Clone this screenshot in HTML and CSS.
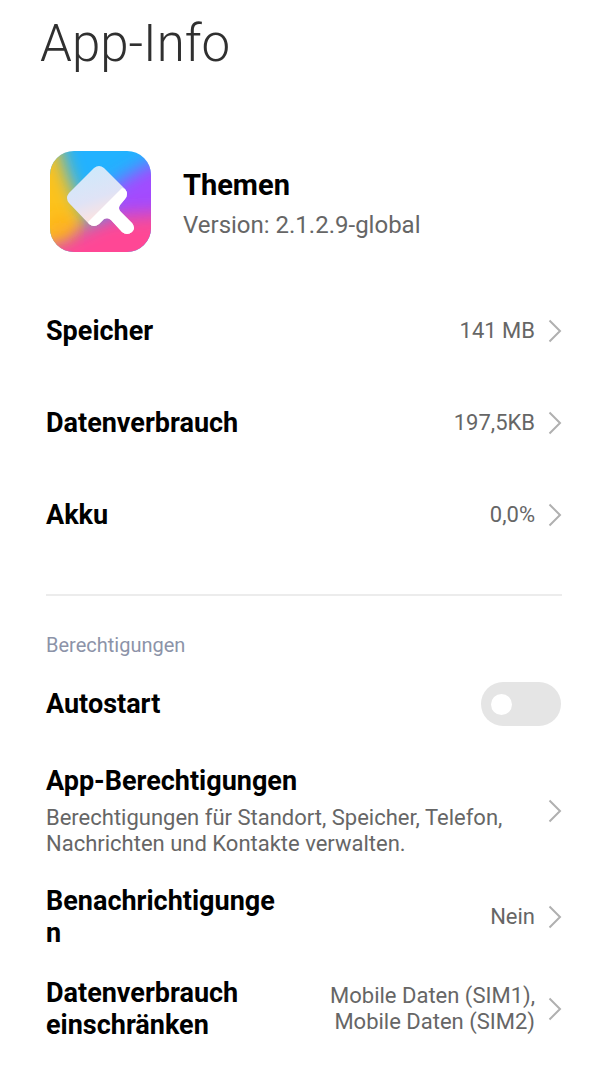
FILE: index.html
```
<!doctype html>
<html lang="de">
  <head>
    <meta charset="utf-8">
    <meta name="viewport" content="width=device-width, initial-scale=1">
    <title>App-Info</title>
    <link rel="stylesheet" href="styles.css">
  </head>
  <body>
    <svg width="0" height="0" class="defs" aria-hidden="true">
      <symbol id="chevron" viewBox="0 0 14 24">
        <path d="M1.5 1.5 L12 12 L1.5 22.5" fill="none" stroke="#b0b0b0" stroke-width="2"/>
      </symbol>
    </svg>

    <h1>App-Info</h1>

    <main>
      <header class="app">
        <svg class="app-icon" viewBox="0 0 101 101" aria-hidden="true">
          <defs>
            <clipPath id="tile"><rect width="101" height="101" rx="24"/></clipPath>
            <linearGradient id="glass" x1="40" y1="18" x2="56" y2="64" gradientUnits="userSpaceOnUse">
              <stop offset="0" stop-color="#cfe9fb"/>
              <stop offset="0.6" stop-color="#dfe3f6"/>
              <stop offset="1" stop-color="#fbe3e2"/>
            </linearGradient>
            <filter id="soft" x="-50%" y="-50%" width="200%" height="200%">
              <feGaussianBlur stdDeviation="9"/>
            </filter>
          </defs>
          <g clip-path="url(#tile)">
            <rect width="101" height="101" fill="#22b2ff"/>
            <path d="M140 4 L100 12 L60 36 V80 H140 Z" fill="#a24bff" filter="url(#soft)"/>
            <path d="M-30 -30 H2 L16 20 L40 80 L-30 120 Z" fill="#fcc21c" filter="url(#soft)"/>
            <path d="M-30 110 L22 82 L56 66 L76 64 L140 60 V130 H-30 Z" fill="#ff4795" filter="url(#soft)"/>
            <circle cx="10" cy="76" r="12" fill="#ffb01c" filter="url(#soft)"/>
          </g>
          <path d="M44 17 Q49 13 54 17 L75 38 Q79 43 75 48 L70 54 Q68 57 70 60 L82 72 Q86 77 82 81 Q77 85 72 81 L61 69 Q58 66 54 68 L49 73 Q44 77 39 73 L19 52 Q15 47 19 42 Z" fill="url(#glass)"/>
          <path d="M72 37 L75 38 Q79 43 75 48 L70 54 Q68 57 70 60 L82 72 Q86 77 82 81 Q77 85 72 81 L61 69 Q58 66 54 68 L49 73 Q44 77 39 73 L38 71 Z" fill="#fff"/>
        </svg>
        <div class="app-text">
          <h2>Themen</h2>
          <p class="version">Version: 2.1.2.9-global</p>
        </div>
      </header>

      <nav class="group">
        <a class="row" href="#speicher">
          <span class="name">Speicher</span>
          <span class="value">141 MB</span>
          <svg class="chevron"><use href="#chevron"/></svg>
        </a>
        <a class="row" href="#datenverbrauch">
          <span class="name">Datenverbrauch</span>
          <span class="value">197,5KB</span>
          <svg class="chevron"><use href="#chevron"/></svg>
        </a>
        <a class="row" href="#akku">
          <span class="name">Akku</span>
          <span class="value">0,0%</span>
          <svg class="chevron"><use href="#chevron"/></svg>
        </a>
      </nav>

      <section class="group permissions">
        <h3>Berechtigungen</h3>
        <div class="row">
          <label class="name" for="autostart">Autostart</label>
          <input class="switch" type="checkbox" role="switch" id="autostart">
        </div>
        <a class="row row-tall" href="#app-berechtigungen">
          <span class="name">App-Berechtigungen
            <small>Berechtigungen für Standort, Speicher, Telefon, Nachrichten und Kontakte verwalten.</small>
          </span>
          <svg class="chevron"><use href="#chevron"/></svg>
        </a>
        <a class="row split" href="#benachrichtigungen">
          <span class="name">Benachrichtigungen</span>
          <span class="value">Nein</span>
          <svg class="chevron"><use href="#chevron"/></svg>
        </a>
        <a class="row split" href="#einschraenken">
          <span class="name">Datenverbrauch einschränken</span>
          <span class="value">Mobile Daten (SIM1), Mobile Daten (SIM2)</span>
          <svg class="chevron"><use href="#chevron"/></svg>
        </a>
      </section>
    </main>
  </body>
</html>
```

FILE: styles.css
```
* {
  box-sizing: border-box;
}

body {
  margin: 0;
  padding: 12px 47px 24px 46px;
  font-family: Roboto, sans-serif;
  color: #000;
  background-color: #fff;
}

h1, h2, h3, p {
  margin: 0;
}

h1 {
  margin-left: -6px;
  font-size: 51px;
  line-height: 64px;
  font-weight: 300;
  color: #303030;
}

.defs {
  position: absolute;
}

.app {
  display: flex;
  align-items: center;
  gap: 32px;
  padding: 75px 4px 33px;
}

.app-icon {
  flex: none;
  width: 101px;
  height: 101px;
}

.app-text {
  padding-top: 6px;
}

h2 {
  font-size: 29px;
  line-height: 40px;
  font-weight: 700;
}

.version {
  font-size: 24px;
  line-height: 40px;
  color: #666;
}

.row {
  display: flex;
  align-items: center;
  min-height: 92px;
  color: inherit;
  text-decoration: none;
}

.row-tall {
  min-height: 121px;
}

.name {
  flex: 1;
  font-size: 27px;
  line-height: 32px;
  font-weight: 700;
}

.name small {
  display: block;
  margin-top: 8px;
  padding-right: 24px;
  font-size: 22px;
  line-height: 26px;
  font-weight: 400;
  color: #666;
}

.value {
  font-size: 22px;
  line-height: 26px;
  text-align: right;
  color: #666;
}

/* name and value share the row equally, long words break */
.split .name,
.split .value {
  flex: 1;
  min-width: 0;
  overflow-wrap: anywhere;
}

.split .value {
  margin-left: 24px;
}

.chevron {
  flex: none;
  width: 14px;
  height: 24px;
  margin-left: 13px;
}

.permissions {
  margin-top: 33px;
  padding-top: 36px;
  border-top: 2px solid #ececec;
}

h3 {
  font-size: 20px;
  line-height: 26px;
  font-weight: 400;
  color: #8c93a8;
}

.switch {
  appearance: none;
  flex: none;
  display: flex;
  align-items: center;
  width: 80px;
  height: 44px;
  margin: 0 1px 0 0;
  padding: 0 10px;
  border-radius: 22px;
  background-color: #e5e5e5;
}

.switch::before {
  content: "";
  width: 21px;
  height: 21px;
  border-radius: 50%;
  background-color: #fff;
}

.switch:checked {
  justify-content: flex-end;
  background-color: #3482ff;
}
```
